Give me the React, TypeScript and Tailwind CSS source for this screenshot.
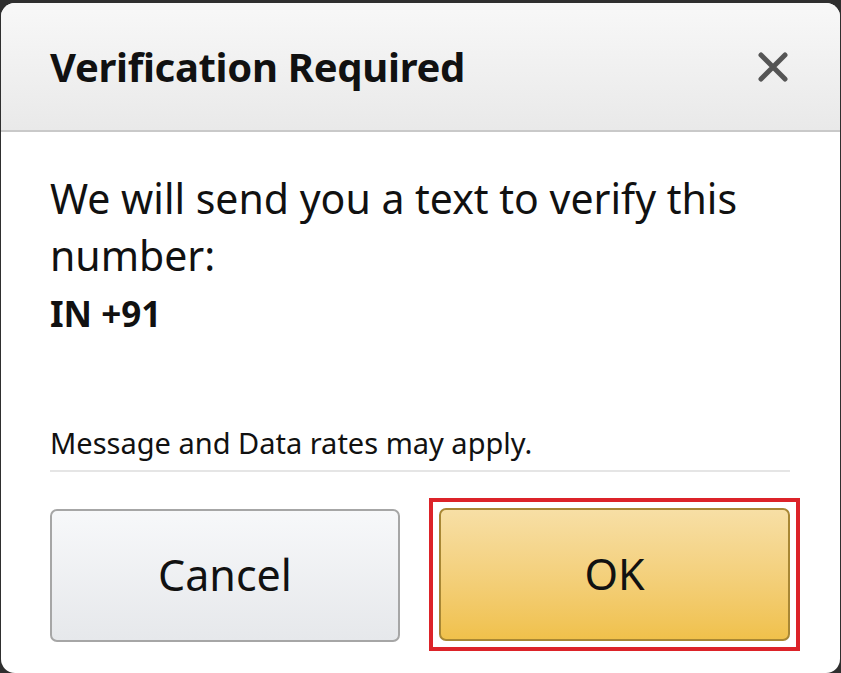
import React from 'react';

export default function App() {
  return (
    <div className="h-[673px] w-[841px] bg-[#2f2f2f] px-[1px] pt-[3px] overflow-hidden">
      <div
        className="flex h-[670px] flex-col rounded-[14px] bg-white overflow-hidden"
        style={{ fontFamily: '"Noto Sans", "Open Sans", sans-serif' }}
      >
        {/* header */}
        <div className="flex h-[129px] shrink-0 items-center justify-between border-b-2 border-[#c9c9c9] bg-gradient-to-b from-[#f8f8f8] to-[#e9e9e9] pl-[49px] pr-[47px]">
          <h1 className="text-[40px] font-bold tracking-[-0.3px] text-[#111]">
            Verification Required
          </h1>
          <button className="flex h-[40px] w-[40px] items-center justify-center">
            <svg width="30" height="30" viewBox="0 0 30 30">
              <path
                d="M3 3 L27 27 M27 3 L3 27"
                stroke="#555"
                strokeWidth="5"
                strokeLinecap="round"
              />
            </svg>
          </button>
        </div>

        {/* body */}
        <div className="flex flex-1 flex-col pl-[49px] pr-[50px] pt-[38px]">
          <p className="text-[41px] leading-[57px] text-[#111]">
            We will send you a text to verify this number:
          </p>
          <p className="mt-[9px] text-[35px] leading-[42px] font-bold text-[#111]">IN +91</p>

          <p className="mt-[90px] text-[29px] leading-[36px] text-[#111]">
            Message and Data rates may apply.
          </p>
          <div className="mt-[9px] h-[2px] w-full bg-[#e5e5e5]" />

          <div className="mt-[37px] flex items-start gap-[29px]">
            <button className="flex h-[133px] w-[350px] shrink-0 items-center justify-center rounded-[7px] border-2 border-[#a6a6a6] bg-gradient-to-b from-[#f7f8fa] to-[#e6e8eb] text-[43px] text-[#111]">
              Cancel
            </button>
            <div className="-mt-[11px] shrink-0 border-[4px] border-[#dc2329] p-[6px]">
              <button className="flex h-[133px] w-[351px] items-center justify-center rounded-[7px] border-2 border-[#a88734] bg-gradient-to-b from-[#f7dfa5] to-[#f0c14b] text-[43px] text-[#111]">
                OK
              </button>
            </div>
          </div>
        </div>
      </div>
    </div>
  );
}
